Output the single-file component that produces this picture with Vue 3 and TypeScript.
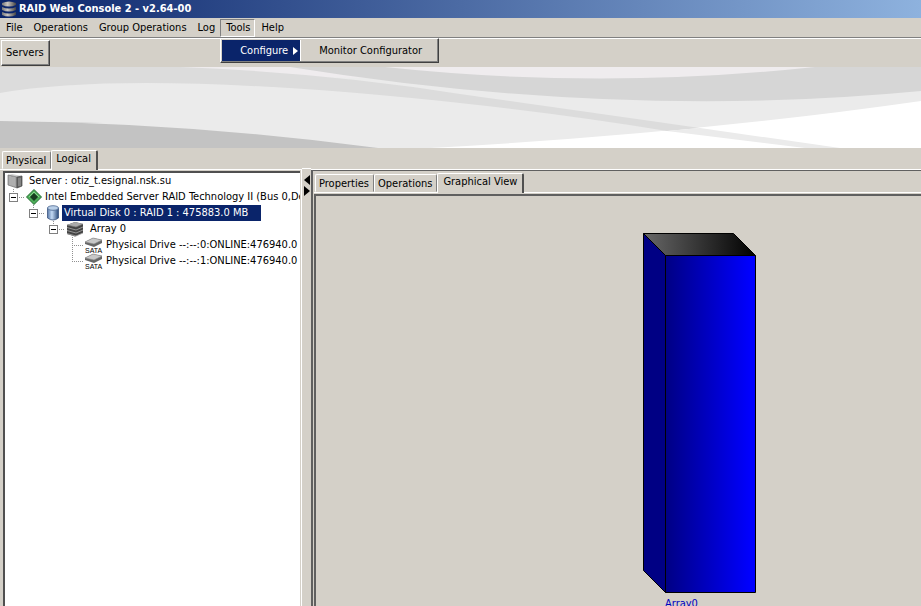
<script setup lang="ts">
import { ref } from 'vue'

type NodeIcon = 'server' | 'controller' | 'disk' | 'array' | 'drive'

interface TreeNode {
  id: number
  level: number
  icon: NodeIcon
  label: string
  expandable: boolean
  last: boolean
}

const menusBefore: string[] = ['File', 'Operations', 'Group Operations', 'Log']

const nodes: TreeNode[] = [
  { id: 1, level: 0, icon: 'server', label: 'Server : otiz_t.esignal.nsk.su', expandable: false, last: true },
  { id: 2, level: 1, icon: 'controller', label: 'Intel Embedded Server RAID Technology II (Bus 0,Dev 31)', expandable: true, last: true },
  { id: 3, level: 2, icon: 'disk', label: 'Virtual Disk 0 : RAID 1 : 475883.0 MB', expandable: true, last: true },
  { id: 4, level: 3, icon: 'array', label: 'Array 0', expandable: true, last: true },
  { id: 5, level: 4, icon: 'drive', label: 'Physical Drive --:--:0:ONLINE:476940.0', expandable: false, last: false },
  { id: 6, level: 4, icon: 'drive', label: 'Physical Drive --:--:1:ONLINE:476940.0', expandable: false, last: true },
]

const selected = ref<number>(3)
const treeTab = ref<string>('Logical')
const viewTab = ref<string>('Graphical View')
</script>

<template>
  <div class="window">
    <header class="title-bar">
      <svg class="app-icon" viewBox="0 0 16 16" aria-hidden="true">
        <defs>
          <linearGradient id="metal" x1="0" x2="1" y1="0" y2="0">
            <stop offset="0" stop-color="#777" />
            <stop offset=".4" stop-color="#c8c4c0" />
            <stop offset="1" stop-color="#444" />
          </linearGradient>
        </defs>
        <g fill="url(#metal)">
          <path d="M1 2Q8-1 15 2V4Q8 7 1 4Z" />
          <path d="M1 6Q8 9 15 6V9Q8 12 1 9Z" />
          <path d="M1 11Q8 14 15 11V14Q8 17 1 14Z" />
        </g>
      </svg>
      <h1>RAID Web Console 2 - v2.64-00</h1>
    </header>

    <nav class="menu-bar">
      <button v-for="menu in menusBefore" :key="menu" type="button" class="menu">{{ menu }}</button>
      <div class="menu-holder">
        <button type="button" class="menu open">Tools</button>
        <div class="popup">
          <button type="button" class="popup-item active">
            Configure
            <svg viewBox="0 0 5 8" aria-hidden="true"><path d="M0 0L5 4L0 8Z" fill="#fff" /></svg>
          </button>
          <button type="button" class="popup-item sub">Monitor Configurator</button>
        </div>
      </div>
      <button type="button" class="menu">Help</button>
    </nav>

    <div class="toolbar">
      <button type="button" class="tool">Servers</button>
    </div>

    <svg class="banner" viewBox="0 0 921 81" preserveAspectRatio="none" aria-hidden="true">
      <rect width="921" height="81" fill="#ebebeb" />
      <path d="M180 0H820L690 12L460 12L300 10Z" fill="#efecee" />
      <path d="M430 81Q690 67 921 34V81Z" fill="#fff" />
      <path d="M0 0H180Q330 6 460 27Q580 44 700 61L667 64Q570 48 460 36Q140 2 0 26Z" fill="#dcdcdc" />
      <path d="M700 61L840 81H805L667 64Z" fill="#ebebeb" />
      <path d="M290 0H385Q600 23 815 0H921V24Q620 53 290 0Z" fill="#d6d6d6" />
      <path d="M0 54Q190 56 378 81H0Z" fill="#c3c3c3" />
    </svg>

    <main class="split">
      <section class="left-pane">
        <div class="tabs" role="tablist">
          <button
            v-for="tab in ['Physical', 'Logical']"
            :key="tab"
            type="button"
            role="tab"
            class="tab"
            :class="{ current: treeTab === tab }"
            :aria-selected="treeTab === tab"
            @click="treeTab = tab"
          >{{ tab }}</button>
        </div>
        <div class="tree-frame">
          <ul class="tree" role="tree">
            <li
              v-for="node in nodes"
              :key="node.id"
              role="treeitem"
              class="node"
              :class="['level-' + node.level, { selected: selected === node.id }]"
              @click="selected = node.id"
            >
              <svg v-if="node.level > 0" class="branch" viewBox="0 0 21 16" aria-hidden="true">
                <path d="M8.500 0V8" class="dots" />
                <path v-if="!node.last" d="M8.500 8V16" class="dots" />
                <path d="M8 8.500H20" class="dots" />
                <g v-if="node.expandable">
                  <rect x="4.500" y="4.500" width="8" height="8" fill="#fff" stroke="#808080" />
                  <path d="M6 8.500H11" stroke="#000" />
                </g>
              </svg>

              <svg v-if="node.icon === 'server'" class="icon" viewBox="0 0 16 16" aria-hidden="true">
                <path d="M1 2L5 1L15 3L10 4Z" fill="#d0d0d0" />
                <path d="M1 2L10 4V15L1 12Z" fill="#a4a4a4" stroke="#777" stroke-width=".7" />
                <path d="M10 4L15 3V13L10 15Z" fill="#666" stroke="#444" stroke-width=".7" />
                <path d="M3 3V12M5 4V12.500M7 4V13" stroke="#c4c4c4" stroke-width=".7" />
                <path d="M11 6H14M11 8H14M11 10H14M11 12H14" stroke="#bbb" stroke-width=".7" />
              </svg>
              <svg v-else-if="node.icon === 'controller'" class="icon" viewBox="0 0 16 16" aria-hidden="true">
                <path d="M8 .5L15.500 8L8 15.500L.5 8Z" fill="#4cae58" stroke="#256b31" />
                <path d="M8 4L12 8L8 12L4 8Z" fill="#173d20" />
                <path d="M3 8L8 3L13 8" fill="none" stroke="#9adf9c" stroke-width=".8" />
              </svg>
              <svg v-else-if="node.icon === 'disk'" class="icon" viewBox="0 0 16 16" aria-hidden="true">
                <defs>
                  <linearGradient id="cyl" x1="0" x2="1" y1="0" y2="0">
                    <stop offset="0" stop-color="#5878a8" />
                    <stop offset=".4" stop-color="#c4daf4" />
                    <stop offset="1" stop-color="#284878" />
                  </linearGradient>
                </defs>
                <path d="M1.500 3V13Q7 17 12.500 13V3Z" fill="url(#cyl)" stroke="#3b5680" stroke-width=".8" />
                <ellipse cx="7" cy="3" rx="5.500" ry="2.300" fill="#b9cfe8" stroke="#4c6790" stroke-width=".8" />
              </svg>
              <svg v-else-if="node.icon === 'array'" class="icon wide" viewBox="0 0 18 16" aria-hidden="true">
                <path d="M1 4L9 1L17 3V12L9 15.500L1 13Z" fill="#444" />
                <path d="M1 4L9 1L17 3L10 6Z" fill="#aaa" />
                <path d="M1 6.500L10 9L17 6M1 9.500L10 12L17 9M1 12.500L10 15L17 12" fill="none" stroke="#aaa" stroke-width=".8" />
                <path d="M1 4L10 6L17 3" fill="none" stroke="#777" stroke-width=".7" />
              </svg>
              <svg v-else class="icon wide" viewBox="0 0 18 16" aria-hidden="true">
                <path d="M0 5L8 1L17 3V6L9 10L0 7Z" fill="#666" />
                <path d="M0 5L8 1L17 3L9 7Z" fill="#c8c8c8" stroke="#888" stroke-width=".6" />
                <text x="0" y="16" class="sata">SATA</text>
              </svg>

              <span class="label">{{ node.label }}</span>
            </li>
          </ul>
        </div>
      </section>

      <div class="divider">
        <button type="button" aria-label="Collapse left pane">
          <svg viewBox="0 0 6 10"><path d="M6 0V10L0 5Z" /></svg>
        </button>
        <button type="button" aria-label="Collapse right pane">
          <svg viewBox="0 0 6 10"><path d="M0 0V10L6 5Z" /></svg>
        </button>
      </div>

      <section class="right-pane">
        <div class="tabs" role="tablist">
          <button
            v-for="tab in ['Properties', 'Operations', 'Graphical View']"
            :key="tab"
            type="button"
            role="tab"
            class="tab"
            :class="{ current: viewTab === tab }"
            :aria-selected="viewTab === tab"
            @click="viewTab = tab"
          >{{ tab }}</button>
        </div>
        <div class="view">
          <figure class="array">
            <svg viewBox="0 0 114 361" aria-hidden="true">
              <defs>
                <linearGradient id="front" x1="0" x2="1" y1="0" y2="0">
                  <stop offset="0" stop-color="#000084" />
                  <stop offset=".95" stop-color="#00f" />
                </linearGradient>
                <linearGradient id="lid" x1="0" x2="1" y1="0" y2="0">
                  <stop offset="0" stop-color="#686868" />
                  <stop offset="1" stop-color="#000" />
                </linearGradient>
              </defs>
              <g stroke="#000" stroke-linejoin="round">
                <path d="M.5 .5H90.500L112.500 22.500H22.500Z" fill="url(#lid)" />
                <path d="M.5 .5L22.500 22.500V359.500L.5 337.500Z" fill="#000084" />
                <path d="M22.500 22.500H112.500V359.500H22.500Z" fill="url(#front)" />
              </g>
            </svg>
            <figcaption>Array0</figcaption>
          </figure>
        </div>
      </section>
    </main>
  </div>
</template>

<style>
body {
  margin: 0;
  overflow: hidden;
}
</style>

<style scoped>
.window {
  display: flex;
  flex-direction: column;
  height: 100vh;
  overflow: hidden;
  background: #d4d0c8;
  color: #000;
  font: 11px/16px Tahoma, "DejaVu Sans Condensed", "DejaVu Sans", sans-serif;
}

button {
  margin: 0;
  border: 0;
  padding: 0;
  background: none;
  color: inherit;
  font: inherit;
  white-space: nowrap;
}

.title-bar {
  display: flex;
  align-items: center;
  gap: 2px;
  height: 18px;
  flex: none;
  padding-left: 1px;
  background: linear-gradient(90deg, #0a246a, #8eb2de);
  color: #fff;
}

.app-icon {
  width: 16px;
  height: 16px;
}

h1 {
  margin: 0;
  font-size: 11px;
  font-weight: bold;
}

.menu-bar {
  display: flex;
  flex: none;
  height: 20px;
  padding-top: 1px;
  box-sizing: border-box;
  border-bottom: 1px solid #808080;
}

.menu {
  height: 18px;
  padding: 0 4px 0 5px;
  border: 1px solid transparent;
}

.menu.open {
  border-color: #808080 #fff #fff #808080;
}

.menu-holder {
  position: relative;
}

.popup {
  position: absolute;
  z-index: 1;
  top: 19px;
  left: 0;
  display: flex;
  border: 1px solid;
  border-color: #fff #404040 #404040 #fff;
  box-shadow: inset -1px -1px #808080;
  background: #d4d0c8;
  padding: 1px;
}

.popup-item {
  display: flex;
  align-items: center;
  height: 21px;
}

.popup-item.active {
  gap: 5px;
  padding: 0 2px 0 18px;
  background: #0a246a;
  color: #fff;
}

.popup-item.active svg {
  width: 5px;
  height: 8px;
}

.popup-item.sub {
  border-left: 1px solid #fff;
  padding: 0 15px 0 18px;
}

.toolbar {
  flex: none;
  height: 28px;
  border-top: 1px solid #fff;
}

.tool {
  height: 26px;
  margin: 1px 0 0 1px;
  padding: 0 5px 0 4px;
  border: 1px solid;
  border-color: #fff #404040 #404040 #fff;
  box-shadow: inset -1px -1px #808080;
}

.banner {
  display: block;
  flex: none;
  width: 100%;
  height: 81px;
}

.split {
  display: flex;
  flex: 1;
  min-height: 0;
}

.left-pane {
  display: flex;
  flex-direction: column;
  width: 302px;
  flex: none;
}

.tabs {
  display: flex;
  align-items: flex-end;
  flex: none;
  height: 21px;
  padding-left: 2px;
  border-bottom: 1px solid #fff;
}

.tab {
  height: 18px;
  padding: 1px 4px 0 3px;
  border: 1px solid;
  border-color: #fff #808080 transparent #fff;
  border-radius: 2px 2px 0 0;
}

.tab.current {
  height: 20px;
  margin-bottom: -1px;
  padding: 0 5px 3px 4px;
  border-right: 2px solid #505050;
  border-bottom: 0;
  background: #d4d0c8;
}

.tree-frame {
  display: flex;
  flex: 1;
  min-height: 0;
  padding: 1px 1px 0 3px;
  border-right: 1px solid #fff;
}

.tree {
  flex: 1;
  min-width: 0;
  margin: 0;
  padding: 0;
  border: solid #505050;
  border-width: 2px 0 0 2px;
  background: #fff;
  list-style: none;
  overflow: hidden;
}

.node {
  display: flex;
  align-items: center;
  height: 16px;
  white-space: nowrap;
}

.level-0 { padding-left: 2px; }
.level-2 { padding-left: 20px; }
.level-3 { padding-left: 40px; }
.level-4 { padding-left: 59px; }

.branch {
  flex: none;
  width: 21px;
  height: 16px;
}

.dots {
  fill: none;
  stroke: #909090;
  stroke-dasharray: 1 1;
}

.icon {
  flex: none;
  width: 16px;
  height: 16px;
}

.icon.wide {
  width: 18px;
}

.sata {
  font: 7px/7px "Liberation Sans", sans-serif;
}

.label {
  padding: 0 3px;
}

.level-0 .label,
.level-3 .label {
  padding-left: 6px;
}

.selected .label {
  padding: 0 13px 0 2px;
  background: #0a246a;
  color: #fff;
}

.divider {
  display: flex;
  flex-direction: column;
  flex: none;
  width: 9px;
  gap: 1px;
  margin-top: 20px;
  padding-top: 6px;
  align-items: center;
  border-top: 1px solid #fff;
  box-sizing: border-box;
}

.divider button,
.divider svg {
  display: block;
  width: 6px;
  height: 10px;
}

.right-pane {
  display: flex;
  flex-direction: column;
  flex: 1;
  min-width: 0;
  margin-top: 22px;
  border: solid #606060;
  border-width: 1px 0 0 2px;
  box-shadow: 0 -1px #fff;
}

.right-pane .tabs {
  margin-left: 1px;
  padding-left: 1px;
}

.right-pane .tab.current {
  padding-left: 5px;
}

.view {
  flex: 1;
  min-height: 0;
  margin: 1px 0 0 1px;
  border: solid #606060;
  border-width: 2px 0 0 2px;
  overflow: hidden;
}

.array {
  width: 114px;
  margin: 37px 0 0 327px;
}

.array svg {
  display: block;
  width: 114px;
  height: 361px;
}

figcaption {
  padding-left: 22px;
  margin-top: 2px;
  color: #0000c0;
}
</style>
